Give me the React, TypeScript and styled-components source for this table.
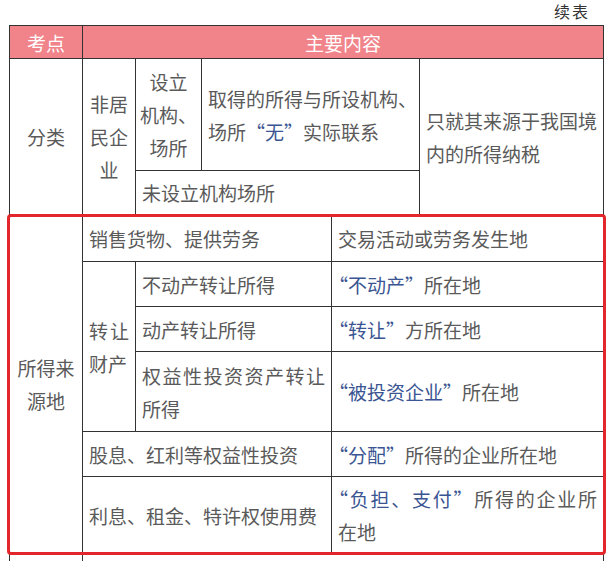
import styled, { createGlobalStyle } from "styled-components";

const GlobalStyle = createGlobalStyle`
    html, body {
        margin: 0;
        padding: 0;
        background: #fff;
        overflow: hidden;
    }
    body {
        font-family: "Noto Sans CJK SC", "Noto Sans", sans-serif;
    }
`

const Page = styled.div`
    width: 616px;
    height: 561px;
    overflow: hidden;
`

const Caption = styled.div`
    height: 23px;
    padding: 2px 26px 0 0;
    text-align: right;
    font-size: 16px;
    line-height: 18px;
    color: #333;
    letter-spacing: 2px;
`

const TableWrap = styled.div`
    position: relative;
    margin-left: 9px;
    width: 595px;
`

const Table = styled.table`
    width: 595px;
    border-collapse: collapse;
    table-layout: fixed;
    font-size: 19px;
    line-height: 33px;
    color: #5a5a5a;
`

const Row = styled.tr<{ $h: number }>`
    height: ${props => props.$h}px;
`

const HeadCell = styled.th`
    background: #f0848a;
    color: #fff;
    font-weight: normal;
    border: 1px solid #333;
    padding: 0;
    line-height: 31px;
`

const Cell = styled.td<{ $align?: "left" | "center" }>`
    border: 1px solid #333;
    padding: 0 6px;
    vertical-align: middle;
    text-align: ${props => props.$align ?? "left"};
    white-space: nowrap;
`

const NarrowCell = styled(Cell)`
    padding: 0 2px;
`

const Spread = styled.span`
    display: block;
    text-align: justify;
    text-align-last: justify;
`

const Key = styled.span`
    color: #3a5592;
`

const OpenQuote = styled.span`
    margin-left: -9px;
`

const Highlight = styled.div`
    position: absolute;
    left: -2px;
    top: 189px;
    width: 599px;
    height: 341px;
    border: 3px solid #e3262b;
    border-radius: 4px;
    box-sizing: border-box;
    pointer-events: none;
`

function Quoted({ children }: { children: string }) {
    return <Key><OpenQuote>“</OpenQuote>{children}”</Key>
}

export default function App() {
    return <Page lang="zh-CN">
        <GlobalStyle />
        <Caption>续表</Caption>
        <TableWrap>
            <Table>
                <colgroup>
                    <col style={{ width: 73 }} />
                    <col style={{ width: 53 }} />
                    <col style={{ width: 66 }} />
                    <col style={{ width: 130 }} />
                    <col style={{ width: 88 }} />
                    <col style={{ width: 184 }} />
                </colgroup>
                <thead>
                    <Row $h={33}>
                        <HeadCell>考点</HeadCell>
                        <HeadCell colSpan={5}>主要内容</HeadCell>
                    </Row>
                </thead>
                <tbody>
                    <Row $h={112}>
                        <Cell rowSpan={2} $align="center">分类</Cell>
                        <NarrowCell rowSpan={2} $align="center">非居<br />民企<br />业</NarrowCell>
                        <NarrowCell $align="center">设立<br />机构、<br />场所</NarrowCell>
                        <Cell colSpan={2}>
                            取得的所得与所设机构、<br />
                            场所<Key>“无”</Key>实际联系
                        </Cell>
                        <Cell rowSpan={2}>只就其来源于我国境<br />内的所得纳税</Cell>
                    </Row>
                    <Row $h={44}>
                        <Cell colSpan={3}>未设立机构场所</Cell>
                    </Row>

                    <Row $h={47}>
                        <Cell rowSpan={6} $align="center">所得来<br />源地</Cell>
                        <Cell colSpan={3}>销售货物、提供劳务</Cell>
                        <Cell colSpan={2}>交易活动或劳务发生地</Cell>
                    </Row>
                    <Row $h={45}>
                        <Cell rowSpan={3}>
                            <Spread>转让</Spread>
                            财产
                        </Cell>
                        <Cell colSpan={2}>不动产转让所得</Cell>
                        <Cell colSpan={2}><Quoted>不动产</Quoted>所在地</Cell>
                    </Row>
                    <Row $h={45}>
                        <Cell colSpan={2}>动产转让所得</Cell>
                        <Cell colSpan={2}><Quoted>转让</Quoted>方所在地</Cell>
                    </Row>
                    <Row $h={80}>
                        <Cell colSpan={2}>
                            <Spread>权益性投资资产转让</Spread>
                            所得
                        </Cell>
                        <Cell colSpan={2}><Quoted>被投资企业</Quoted>所在地</Cell>
                    </Row>
                    <Row $h={45}>
                        <Cell colSpan={3}>股息、红利等权益性投资</Cell>
                        <Cell colSpan={2}><Quoted>分配</Quoted>所得的企业所在地</Cell>
                    </Row>
                    <Row $h={77}>
                        <Cell colSpan={3}>利息、租金、特许权使用费</Cell>
                        <Cell colSpan={2}>
                            <Spread><Quoted>负担、支付</Quoted>所得的企业所</Spread>
                            在地
                        </Cell>
                    </Row>
                    <Row $h={45}>
                        <Cell />
                        <Cell colSpan={5} />
                    </Row>
                </tbody>
            </Table>
            <Highlight />
        </TableWrap>
    </Page>
}
